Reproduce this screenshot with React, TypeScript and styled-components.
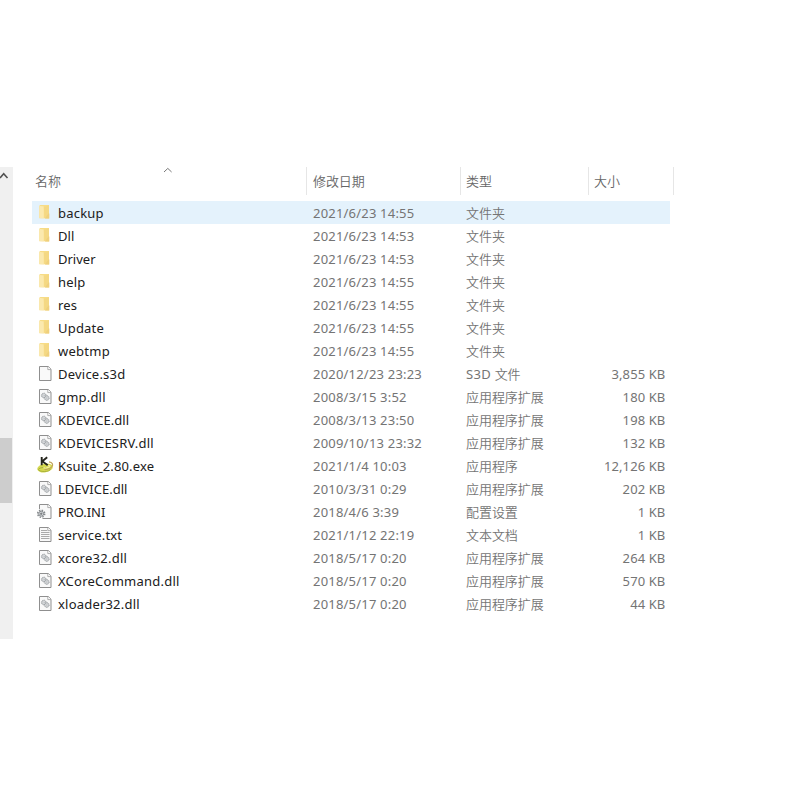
import React from "react";
import styled, { createGlobalStyle } from "styled-components";

const GlobalStyle = createGlobalStyle`
  * { box-sizing: border-box; }
  body {
    margin: 0;
    background: #fff;
    font-family: "Noto Sans", "Noto Sans CJK SC", sans-serif;
    font-size: 13px;
  }
`;

const Page = styled.div`
  width: 800px;
  height: 800px;
  padding-top: 167px;
  display: flex;
  align-items: flex-start;
  overflow: hidden;
  background: #fff;
`;

const ScrollTrack = styled.div`
  width: 13px;
  height: 472px;
  background: #f0f0f0;
  display: flex;
  flex-direction: column;
  justify-content: space-between;
  flex: none;
`;

const ArrowButton = styled.div`
  height: 20px;
  padding-top: 4px;
  line-height: 0;
`;

const ScrollThumb = styled.div`
  width: 12px;
  height: 65px;
  margin-bottom: 136px;
  background: #cdcdcd;
`;

const FileList = styled.div`
  width: 642px;
  margin-left: 19px;
  flex: none;
`;

const Header = styled.div`
  position: relative;
  display: grid;
  grid-template-columns: 275px 154px 128px 85px;
  height: 28px;
  margin-bottom: 6px;
  color: #666;
`;

const HeaderCell = styled.div<{ $inset: number }>`
  padding-left: ${(p) => p.$inset}px;
  border-right: 1px solid #e6e6e6;
  line-height: 27px;
  letter-spacing: -0.1px;
  font-family: "Noto Sans CJK SC", sans-serif;
  font-weight: 350;
`;

const SortMark = styled.svg`
  position: absolute;
  left: 131px;
  top: 0;
`;

const Row = styled.div<{ $selected?: boolean }>`
  display: grid;
  grid-template-columns: 26px 249px 153px 119px 91px;
  width: 638px;
  height: 23px;
  line-height: 25px;
  color: #747474;
  white-space: nowrap;
  background: ${(p) => (p.$selected ? "#e4f2fc" : "transparent")};
`;

const IconCell = styled.div`
  padding-left: 4px;
  height: 22px;
  display: flex;
  align-items: center;
`;

const Name = styled.div<{ $spacing: number }>`
  color: #202020;
  letter-spacing: ${(p) => p.$spacing}px;
`;

const DateText = styled.div`
  padding-left: 6px;
  letter-spacing: 0.2px;
`;

const Kind = styled.div`
  padding-left: 6px;
  line-height: 23px;
  letter-spacing: -0.05px;
  font-weight: 350;
  font-family: "Noto Sans CJK SC", sans-serif;
`;

const Latin = styled.span`
  font-family: "Noto Sans", sans-serif;
  font-weight: 400;
  line-height: 1;
  letter-spacing: 0.3px;
`;

const Size = styled.div`
  text-align: right;
  padding-right: 4.6px;
  letter-spacing: 0.1px;
`;

type IconKind = "folder" | "blank" | "dll" | "exe" | "ini" | "txt";

const Sheet = () => (
  <>
    <path d="M3.5 3.5h8.8l2.7 2.7v11.3H3.5z" fill="#f9f9f9" stroke="#8f8f8f" />
    <path d="M11.8 3.8v2.8H15" fill="#fff" stroke="#9c9c9c" strokeWidth=".8" />
  </>
);

const Gear = ({ x, y, r = 2 }: { x: number; y: number; r?: number }) => (
  <g stroke="#92979b" fill="none">
    <circle cx={x} cy={y} r={r + 0.4} strokeWidth=".8" strokeDasharray="1 .7" />
    <circle cx={x} cy={y} r={r} strokeWidth=".6" fill="#e9ebed" />
    <circle cx={x} cy={y} r={r * 0.35} strokeWidth=".5" fill="#fff" />
  </g>
);

function FileIcon({ kind }: { kind: IconKind }) {
  return (
    <svg width="19" height="20" viewBox="0 0 19 20">
      {kind === "folder" && (
        <>
          <path d="M3.3 3.7l1-.7H13v13.3H3.3z" fill="#f7dc86" />
          <path d="M3.3 3.7l4.5.8v12.1l-4.5-.5z" fill="#fbe9ae" />
          <path d="M7.8 5L13 3.5v12.8H8.6z" fill="#f4d884" />
          <path d="M12.4 11.5h.9v4.9H9z" fill="#efd07c" />
        </>
      )}
      {(kind === "blank" || kind === "dll" || kind === "txt") && <Sheet />}
      {kind === "dll" && (
        <>
          <Gear x={7.8} y={9.5} />
          <Gear x={10.8} y={12} />
        </>
      )}
      {kind === "txt" && (
        <path d="M5 6.5h6M5 8.5h8.5M5 10.5h8.5M5 12.5h8.5M5 14.5h8.5" stroke="#ababab" />
      )}
      {kind === "ini" && (
        <>
          <Sheet />
          <path d="M1 8h5.5v10H1z" fill="#fff" />
          <g stroke="#85898c" fill="none">
            <circle cx="5.2" cy="12.7" r="3.5" strokeWidth="1.5" strokeDasharray="1.5 1.25" />
            <circle cx="5.2" cy="12.7" r="2.5" fill="#d7dadd" />
            <circle cx="5.2" cy="12.7" r=".8" fill="#555" />
          </g>
        </>
      )}
      {kind === "exe" && (
        <>
          <ellipse cx="9" cy="13" rx="7.9" ry="4.3" fill="#d5d950" transform="rotate(-10 9 13)" />
          <ellipse cx="8.3" cy="14.5" rx="5.8" ry="2" fill="none" stroke="#9da733" strokeWidth=".8" />
          <path d="M13 6.8c3.6.5 4.5 3 2.8 5s-4.6 3-7.3 2.7" fill="none" stroke="#c0a45c" strokeWidth="1.2" />
          <path d="M11.5 10.5c2.4-.2 3 .8 1.7 1.6s-3.8 1.1-5.8.6" fill="none" stroke="#f5ef9b" strokeWidth="1.2" />
          <path d="M5.7 2v8.3M11.2 2.2L6.3 6.3l5.4 3.9" fill="none" stroke="#25251d" strokeWidth="1.9" />
        </>
      )}
    </svg>
  );
}

type FileEntry = [IconKind, string, string, string, string, number];

const files: FileEntry[] = [
  ["folder", "backup", "2021/6/23 14:55", "文件夹", "", 0.2],
  ["folder", "Dll", "2021/6/23 14:53", "文件夹", "", 0.1],
  ["folder", "Driver", "2021/6/23 14:53", "文件夹", "", 0],
  ["folder", "help", "2021/6/23 14:55", "文件夹", "", 0.2],
  ["folder", "res", "2021/6/23 14:55", "文件夹", "", 0.1],
  ["folder", "Update", "2021/6/23 14:55", "文件夹", "", 0.2],
  ["folder", "webtmp", "2021/6/23 14:55", "文件夹", "", 0.25],
  ["blank", "Device.s3d", "2020/12/23 23:23", "文件", "3,855 KB", 0.22],
  ["dll", "gmp.dll", "2008/3/15 3:52", "应用程序扩展", "180 KB", 0.2],
  ["dll", "KDEVICE.dll", "2008/3/13 23:50", "应用程序扩展", "198 KB", 0.05],
  ["dll", "KDEVICESRV.dll", "2009/10/13 23:32", "应用程序扩展", "132 KB", 0.2],
  ["exe", "Ksuite_2.80.exe", "2021/1/4 10:03", "应用程序", "12,126 KB", 0.17],
  ["dll", "LDEVICE.dll", "2010/3/31 0:29", "应用程序扩展", "202 KB", 0],
  ["ini", "PRO.INI", "2018/4/6 3:39", "配置设置", "1 KB", -0.08],
  ["txt", "service.txt", "2021/1/12 22:19", "文本文档", "1 KB", 0.18],
  ["dll", "xcore32.dll", "2018/5/17 0:20", "应用程序扩展", "264 KB", 0.27],
  ["dll", "XCoreCommand.dll", "2018/5/17 0:20", "应用程序扩展", "570 KB", 0.24],
  ["dll", "xloader32.dll", "2018/5/17 0:20", "应用程序扩展", "44 KB", 0.2],
];

export default function App() {
  return (
    <Page>
      <GlobalStyle />
      <ScrollTrack>
        <ArrowButton>
          <svg width="10" height="10" viewBox="0 0 10 10">
            <path d="M0 7l3.7-4.2L7.5 7" fill="none" stroke="#505050" strokeWidth="1.6" />
          </svg>
        </ArrowButton>
        <ScrollThumb />
      </ScrollTrack>
      <FileList>
        <Header>
          <HeaderCell $inset={3}>名称</HeaderCell>
          <HeaderCell $inset={6}>修改日期</HeaderCell>
          <HeaderCell $inset={5}>类型</HeaderCell>
          <HeaderCell $inset={5}>大小</HeaderCell>
          <SortMark width="10" height="7" viewBox="0 0 10 7">
            <path d="M1 5l3.8-3.6L8.6 5" fill="none" stroke="#777" />
          </SortMark>
        </Header>
        {files.map(([icon, name, date, kind, size, spacing], index) => (
          <Row key={name} $selected={index === 0}>
            <IconCell>
              <FileIcon kind={icon} />
            </IconCell>
            <Name $spacing={spacing}>{name}</Name>
            <DateText>{date}</DateText>
            <Kind>
              {icon === "blank" && <Latin>S3D </Latin>}
              {kind}
            </Kind>
            <Size>{size}</Size>
          </Row>
        ))}
      </FileList>
    </Page>
  );
}
